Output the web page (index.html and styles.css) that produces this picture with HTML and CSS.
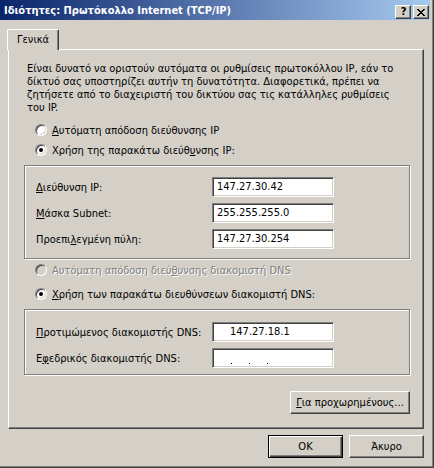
FILE: index.html
```html
<!DOCTYPE html>
<html lang="el">
<head>
<meta charset="utf-8">
<title>Ιδιότητες: Πρωτόκολλο Internet (TCP/IP)</title>
<link rel="stylesheet" href="styles.css">
</head>
<body>
<div class="window">
  <div class="titlebar">
    <span class="title">Ιδιότητες: Πρωτόκολλο Internet (TCP/IP)</span>
    <div class="caption-buttons">
      <div class="cap-btn help">?</div>
      <div class="cap-btn close">
        <svg width="8" height="7" viewBox="0 0 8 7"><path d="M0 0h2v1h-2zM6 0h2v1h-2zM1 1h2v1h-2zM5 1h2v1h-2zM2 2h4v1h-4zM3 3h2v1h-2zM2 4h4v1h-4zM1 5h2v1h-2zM5 5h2v1h-2zM0 6h2v1h-2zM6 6h2v1h-2z" fill="#000"/></svg>
      </div>
    </div>
  </div>
  <div class="client">
    <div class="tabs"><div class="tab">Γενικά</div></div>
    <div class="panel">
      <p class="intro">Είναι δυνατό να οριστούν αυτόματα οι ρυθμίσεις πρωτοκόλλου IP, εάν το<br>δίκτυό σας υποστηρίζει αυτήν τη δυνατότητα. Διαφορετικά, πρέπει να<br>ζητήσετε από το διαχειριστή του δικτύου σας τις κατάλληλες ρυθμίσεις<br>του IP.</p>
      <div class="radio r1"><span class="dot"></span><span class="rlabel"><u>Α</u>υτόματη απόδοση διεύθυνσης IP</span></div>
      <div class="radio r2"><span class="dot checked"></span><span class="rlabel">Χρήση της παρακάτω διεύθ<u>υ</u>νσης IP:</span></div>
      <div class="group g1">
        <div class="row"><span class="flabel"><u>Δ</u>ιεύθυνση IP:</span><div class="field">147.27.30.42</div></div>
        <div class="row"><span class="flabel"><u>Μ</u>άσκα Subnet:</span><div class="field">255.255.255.0</div></div>
        <div class="row"><span class="flabel">Προεπι<u>λ</u>εγμένη πύλη:</span><div class="field">147.27.30.254</div></div>
      </div>
      <div class="radio r3 disabled"><span class="dot"></span><span class="rlabel">Αυτόματη απόδοση διεύ<u>θ</u>υνσης διακομιστή DNS</span></div>
      <div class="radio r4"><span class="dot checked"></span><span class="rlabel"><u>Χ</u>ρήση των παρακάτω διευθύνσεων διακομιστή DNS:</span></div>
      <div class="group g2">
        <div class="row"><span class="flabel"><u>Π</u>ροτιμώμενος διακομιστής DNS:</span><div class="field wide">147.27.18.1</div></div>
        <div class="row"><span class="flabel">Ε<u>φ</u>εδρικός διακομιστής DNS:</span><div class="field empty"><i></i><i></i><i></i></div></div>
      </div>
      <div class="adv-row"><div class="btn adv"><u>Γ</u>ια προχωρημένους...</div></div>
    </div>
    <div class="footer">
      <div class="btn default">OK</div>
      <div class="btn">Άκυρο</div>
    </div>
  </div>
</div>
</body>
</html>
```
FILE: styles.css
```css
html, body {
  margin: 0;
  padding: 0;
  background: #D4D0C8;
}
body {
  font-family: "DejaVu Sans Condensed", "Liberation Sans", sans-serif;
  font-size: 11px;
  color: #000;
}
u { text-decoration: underline; text-underline-offset: 1px; }

.window {
  width: 434px;
  height: 468px;
  box-sizing: border-box;
  background: #D4D0C8;
  border-right: 1px solid #404040;
  border-bottom: 1px solid #404040;
  box-shadow: inset -1px -1px #808080;
  padding: 0 3px 3px 0;
  display: flex;
  flex-direction: column;
}

.titlebar {
  height: 20px;
  background: linear-gradient(to right, #0A246A, #A6CAF0);
  display: flex;
  justify-content: space-between;
  align-items: flex-start;
  padding: 0 1px 0 4px;
}
.title {
  color: #fff;
  font-weight: bold;
  line-height: 22px;
  white-space: nowrap;
}
.caption-buttons {
  display: flex;
  gap: 2px;
  margin-top: 5px;
}
.cap-btn {
  width: 16px;
  height: 14px;
  box-sizing: border-box;
  background: #D4D0C8;
  border-top: 1px solid #fff;
  border-left: 1px solid #fff;
  border-right: 1px solid #404040;
  border-bottom: 1px solid #404040;
  box-shadow: inset -1px -1px #808080;
  display: flex;
  align-items: center;
  justify-content: center;
}
.cap-btn.help {
  font-weight: bold;
  font-size: 11px;
  line-height: 12px;
  padding-left: 1px;
}
.cap-btn.close svg { display: block; margin-left: 0; margin-top: 0; }

.client {
  padding: 9px 6px 0 8px;
  display: flex;
  flex-direction: column;
}

.tabs {
  display: flex;
  margin-left: -1px;
  position: relative;
  z-index: 1;
  margin-bottom: -1px;
}
.tab {
  width: 52px;
  height: 21px;
  box-sizing: border-box;
  background: #D4D0C8;
  border-top: 1px solid #fff;
  border-left: 1px solid #fff;
  border-right: 1px solid #404040;
  box-shadow: inset -1px 0 #808080;
  border-top-left-radius: 2px;
  border-top-right-radius: 2px;
  padding-left: 9px;
  line-height: 20px;
}

.panel {
  height: 380px;
  box-sizing: border-box;
  border-top: 1px solid #fff;
  border-left: 1px solid #fff;
  border-right: 1px solid #404040;
  border-bottom: 1px solid #404040;
  box-shadow: inset -1px -1px #808080;
  padding: 0 13px 0 15px;
  display: flex;
  flex-direction: column;
}

.intro {
  margin: 12px 0 0 3px;
  line-height: 13px;
  white-space: nowrap;
}

.radio {
  display: flex;
  align-items: center;
  height: 16px;
  margin-left: 11px;
}
.r1 { margin-top: 8px; }
.r2 { margin-top: 4px; }
.r3 { margin-top: 3px; }
.r4 { margin-top: 8px; }

.dot {
  width: 12px;
  height: 12px;
  box-sizing: border-box;
  border-radius: 50%;
  border: 1px solid;
  border-color: #808080 #fff #fff #808080;
  background: #fff;
  box-shadow: inset 1px 1px #404040, inset -1px -1px #D4D0C8;
  position: relative;
  flex: none;
}
.dot.checked::after {
  content: "";
  position: absolute;
  left: 3px;
  top: 3px;
  width: 4px;
  height: 4px;
  border-radius: 50%;
  background: #000;
}
.rlabel {
  margin-left: 5px;
  white-space: nowrap;
}
.disabled .dot { background: #D4D0C8; }
.disabled .rlabel {
  color: #808080;
  text-shadow: 1px 1px #fff;
}

.group {
  border: 1px solid #808080;
  box-shadow: inset 1px 1px #fff, 1px 1px #fff;
  display: flex;
  flex-direction: column;
  gap: 6px;
  padding-left: 11px;
}
.g1 { margin-top: 7px; padding-top: 11px; padding-bottom: 9px; }
.g2 { margin-top: 7px; padding-top: 12px; padding-bottom: 6px; }

.row {
  display: flex;
  align-items: center;
  height: 20px;
}
.flabel {
  width: 176px;
  flex: none;
  white-space: nowrap;
}
.field {
  width: 122px;
  height: 20px;
  box-sizing: border-box;
  background: #fff;
  border-top: 1px solid #808080;
  border-left: 1px solid #808080;
  border-right: 1px solid #fff;
  border-bottom: 1px solid #fff;
  box-shadow: inset 1px 1px #404040, inset -1px -1px #D4D0C8;
  padding-left: 4px;
  line-height: 18px;
  white-space: nowrap;
}
.field.wide { padding-left: 17px; }
.field.empty {
  display: flex;
  align-items: flex-end;
  padding-left: 18px;
  padding-bottom: 3px;
  gap: 17px;
}
.field.empty i {
  width: 1px;
  height: 1px;
  background: #000;
}

.adv-row {
  display: flex;
  justify-content: flex-end;
  margin-top: 16px;
}

.btn {
  height: 23px;
  width: 75px;
  box-sizing: border-box;
  background: #D4D0C8;
  border-top: 1px solid #fff;
  border-left: 1px solid #fff;
  border-right: 1px solid #404040;
  border-bottom: 1px solid #404040;
  box-shadow: inset -1px -1px #808080;
  display: flex;
  align-items: center;
  justify-content: center;
  white-space: nowrap;
}
.btn.adv { width: 120px; }
.btn.default {
  border: 1px solid #000;
  box-shadow: inset 1px 1px #fff, inset -1px -1px #404040, inset -2px -2px #808080;
}

.footer {
  display: flex;
  justify-content: flex-end;
  gap: 6px;
  margin-top: 6px;
}
```
